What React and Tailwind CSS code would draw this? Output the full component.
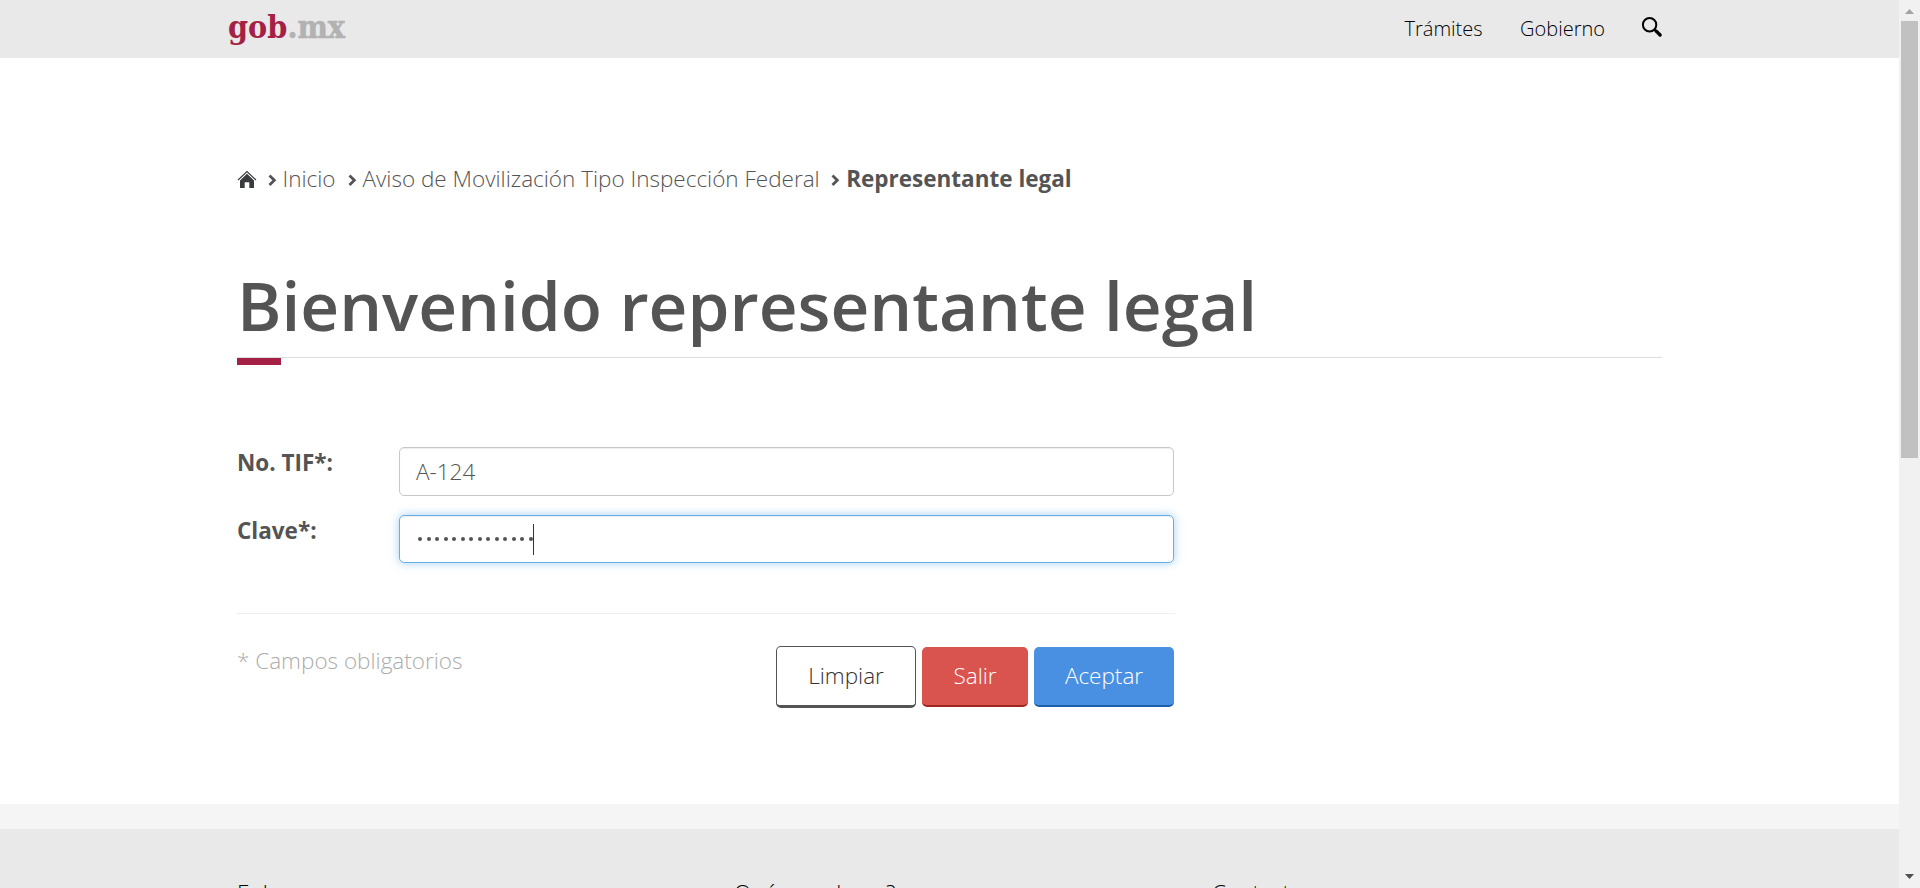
import React from "react";

function Logo() {
  return (
    <svg className="h-[58px] w-[126px]" viewBox="0 0 126 58" fontFamily="'DejaVu Serif', serif" fontWeight="700">
      <text x="3" y="38" fontSize="31" fill="#a42145" textLength="117" lengthAdjust="spacingAndGlyphs">
        gob<tspan fill="#b2b2b2" stroke="#b2b2b2" strokeWidth="0.6">.mx</tspan>
      </text>
    </svg>
  );
}

function SearchIcon() {
  return (
    <svg className="ml-[36px] mt-4 h-[22px] w-[22px]" viewBox="0 0 22 22" fill="none" stroke="#000">
      <circle cx="8.6" cy="8.7" r="6.7" strokeWidth="2" />
      <path d="M13.4 13.6l2.6 2.6" strokeWidth="2.6" />
      <path d="M15.5 15.4l3.6 3.6" strokeWidth="3.4" strokeLinecap="round" />
    </svg>
  );
}

function HomeIcon() {
  return (
    <svg className="mt-[20px] h-[19px] w-[20px] shrink-0" viewBox="0 0 20 19">
      <path d="M1 10L10 1.5L19 10" fill="none" stroke="#393c3e" strokeWidth="1.2" />
      <path d="M10 3.8L17 10.4V18H12.3V12.3H7.7V18H3V10.4Z" fill="#393c3e" />
    </svg>
  );
}

function Chevron({ className }) {
  return (
    <svg className={"mt-[24px] h-[13px] w-[9px] shrink-0 " + className} viewBox="0 0 9 13" fill="none" stroke="#545454" strokeWidth="2.8">
      <path d="M1.5 1.5L6.3 6.3L1.5 11.1" />
    </svg>
  );
}

function Header() {
  return (
    <header className="h-[58px] bg-[#e9e9e9]">
      <div className="mx-auto flex h-full w-[1463px] justify-between pl-[7px] pr-[18px]">
        <Logo />
        <nav className="flex text-[20px] font-light leading-[58px] text-black">
          <span>Trámites</span>
          <span className="ml-[37.5px]">Gobierno</span>
          <SearchIcon />
        </nav>
      </div>
    </header>
  );
}

function Breadcrumb() {
  return (
    <div className="flex h-[60px] whitespace-nowrap text-[22.5px] font-light leading-[58px]">
      <HomeIcon />
      <Chevron className="ml-[10.5px]" />
      <span className="ml-[6px]">Inicio</span>
      <Chevron className="ml-[12px]" />
      <span className="ml-[6px]">Aviso de Movilización Tipo Inspección Federal</span>
      <Chevron className="ml-[11.5px]" />
      <span className="ml-[6px] font-bold">Representante legal</span>
    </div>
  );
}

function Form() {
  return (
    <form className="w-[938px]">
      <div className="flex h-[68px]">
        <label className="w-[162px] text-[22.5px] font-bold leading-[32px]">No. TIF*:</label>
        <div className="h-[49px] w-[775px] rounded-[5px] border border-[#c8c8c8] pl-[16px] text-[22.5px] font-light leading-[47px] shadow-[inset_0_1px_1px_rgba(0,0,0,0.075)]">
          A-124
        </div>
      </div>
      <div className="flex h-[98px]">
        <label className="w-[162px] text-[22.5px] font-bold leading-[32px]">Clave*:</label>
        <div className="flex h-[48px] w-[775px] items-center rounded-[5px] border border-[#66afe9] pl-[18px] shadow-[inset_0_1px_1px_rgba(0,0,0,0.075),0_0_10px_rgba(102,175,233,0.6)]">
          <div className="flex gap-[4.5px]">
            {Array.from({ length: 14 }, (_, i) => (
              <span key={i} className="h-1 w-1 rounded-full bg-[#545454]" />
            ))}
          </div>
          <span className="ml-[0.5px] h-[31px] w-px bg-[#333]" />
        </div>
      </div>
      <div className="flex justify-between border-t border-[#eeeeee] pr-px pt-[32px] text-[22.5px] font-light">
        <span className="leading-[30px] text-[#acacac]">* Campos obligatorios</span>
        <div className="flex items-start gap-[6px]">
          <button type="button" className="h-[62px] w-[140px] rounded-[5px] border border-b-[3px] border-[#545454] bg-white pb-[1px] text-center text-[#333]">Limpiar</button>
          <button type="button" className="mt-px h-[60px] w-[106px] rounded-[5px] border-b-2 border-[#a02622] bg-[#d9534f] pb-[1px] text-center text-white">Salir</button>
          <button type="button" className="mt-px h-[60px] w-[140px] rounded-[5px] border-b-2 border-[#1d5fad] bg-[#4a90e2] pb-[1px] text-center text-white">Aceptar</button>
        </div>
      </div>
    </form>
  );
}

function Scrollbar() {
  return (
    <div className="flex h-full w-[21px] flex-col items-center bg-[#f1f1f1]">
      <svg className="h-[21px] w-[21px] shrink-0" viewBox="0 0 21 21">
        <path d="M6 14L10.5 9L15 14Z" fill="#a3a3a3" />
      </svg>
      <div className="h-[437px] w-[17px] shrink-0 bg-[#c1c1c1]" />
      <div className="flex-1" />
      <svg className="h-[21px] w-[21px] shrink-0" viewBox="0 0 21 21">
        <path d="M6 7L10.5 12L15 7Z" fill="#505050" />
      </svg>
    </div>
  );
}

export default function App() {
  return (
    <div className="flex h-[888px] w-[1920px] overflow-hidden bg-white font-['Open_Sans',sans-serif] text-[#545454]">
      <div className="flex h-full w-[1899px] flex-col">
        <Header />
        <main className="mx-auto h-[746px] w-[1425px] shrink-0 pt-[92px]">
          <Breadcrumb />
          <h1 className="mt-[48px] h-[100px] whitespace-nowrap border-b border-[#dddddd] text-[67.5px] font-semibold leading-[94px]">
            Bienvenido representante legal
          </h1>
          <div className="h-[7px] w-[44px] bg-[#a42145]" />
          <div className="pt-[82px]">
            <Form />
          </div>
        </main>
        <div className="h-[25px] shrink-0 bg-[#f5f5f5]" />
        <footer className="h-[59px] shrink-0 overflow-hidden bg-[#e9e9e9]">
          <div className="mx-auto flex w-[1425px] pt-[48px] text-[22.5px] font-light leading-[32px] text-black">
            <span className="w-[487.5px]">Enlaces</span>
            <span className="w-[487.5px]">¿Qué es gob.mx?</span>
            <span>Contacto</span>
          </div>
        </footer>
      </div>
      <Scrollbar />
    </div>
  );
}
